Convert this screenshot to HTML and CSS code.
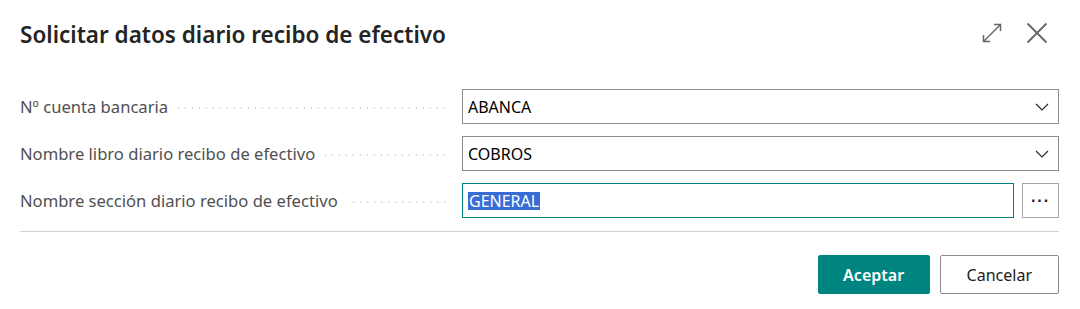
FILE: index.html
```html
<!DOCTYPE html>
<html lang="es">
<head>
<meta charset="UTF-8" />
<meta name="viewport" content="width=device-width, initial-scale=1.0"/>
<title>Solicitar datos diario recibo de efectivo</title>
<link rel="stylesheet" href="styles.css">
</head>
<body>

<div class="dialog">
  <div class="dialog-head">
    <h1 class="dialog-title">Solicitar datos diario recibo de efectivo</h1>
    <div class="head-actions">
      <button class="icon-btn" title="Expandir">
        <svg width="20" height="20" viewBox="0 0 20 20" fill="none" stroke="#666" stroke-width="1.5">
          <path d="M1.5 18.5 L18.5 1.5" />
          <path d="M12 1.5 H18.5 V8" />
          <path d="M1.5 12 V18.5 H8" />
        </svg>
      </button>
      <button class="icon-btn" title="Cerrar">
        <svg width="22" height="22" viewBox="0 0 22 22" fill="none" stroke="#666" stroke-width="1.8">
          <path d="M1.5 1.5 L20.5 20.5 M20.5 1.5 L1.5 20.5" />
        </svg>
      </button>
    </div>
  </div>

  <div class="fields">
    <div class="field">
      <label class="field-label"><span>Nº cuenta bancaria</span><span class="leader"></span></label>
      <div class="field-box">
        <span class="field-value">ABANCA</span>
        <svg class="chevron" width="14" height="8" viewBox="0 0 14 8" fill="none" stroke="#222" stroke-width="1.1">
          <path d="M1 1 L7 7 L13 1" />
        </svg>
      </div>
    </div>
    <div class="field">
      <label class="field-label"><span>Nombre libro diario recibo de efectivo</span><span class="leader"></span></label>
      <div class="field-box">
        <span class="field-value">COBROS</span>
        <svg class="chevron" width="14" height="8" viewBox="0 0 14 8" fill="none" stroke="#222" stroke-width="1.1">
          <path d="M1 1 L7 7 L13 1" />
        </svg>
      </div>
    </div>
    <div class="field">
      <label class="field-label"><span>Nombre sección diario recibo de efectivo</span><span class="leader"></span></label>
      <div class="field-row">
        <div class="field-box focused">
          <span class="field-value selected">GENERAL</span>
        </div>
        <button class="lookup-btn">&middot;&middot;&middot;</button>
      </div>
    </div>
  </div>

  <div class="divider"></div>

  <div class="dialog-foot">
    <button class="btn primary">Aceptar</button>
    <button class="btn">Cancelar</button>
  </div>
</div>

</body>
</html>
```

FILE: styles.css
```css
body {
  margin: 0;
  background-color: #fff;
  font-family: "Noto Sans", "Open Sans", sans-serif;
  color: #212121;
}
.dialog {
  padding: 0 21px 0 20px;
}
.dialog-head {
  display: flex;
  align-items: center;
  justify-content: space-between;
  height: 70px;
}
.dialog-title {
  margin: 0;
  margin-top: -2px;
  font-size: 22.5px;
  font-weight: 600;
  color: #242424;
}
.head-actions {
  display: flex;
  align-items: center;
  gap: 24px;
  margin-right: 11px;
  margin-top: -4px;
}
.icon-btn {
  background: none;
  border: none;
  padding: 0;
  display: flex;
  cursor: pointer;
}
.fields {
  display: flex;
  flex-direction: column;
  gap: 12px;
  margin-top: 19px;
}
.field {
  display: grid;
  grid-template-columns: 442px 1fr;
  align-items: center;
}
.field-label {
  display: flex;
  align-items: center;
  font-size: 16.6px;
  color: #505050;
}
.leader {
  flex: 1;
  height: 2px;
  margin: 3px 14px 0 10px;
  background-image: radial-gradient(circle, #cfcfcf 0.9px, transparent 1.1px);
  background-size: 7px 2px;
  background-position: right center;
}
.field-box {
  display: flex;
  align-items: center;
  justify-content: space-between;
  height: 35px;
  box-sizing: border-box;
  border: 1px solid #8a8d92;
  padding: 0 9px 0 5px;
  font-size: 16px;
  color: #000;
}
.field-box.focused {
  flex: 1;
  border-color: #008080;
}
.field-value.selected {
  background-color: #3a6cd6;
  color: #fff;
  padding: 0 1px;
  line-height: 18px;
}
.field-row {
  display: flex;
  gap: 8px;
}
.lookup-btn {
  width: 37px;
  height: 35px;
  border: 1px solid #a6a6a6;
  background: #fff;
  color: #212121;
  font-size: 16px;
  font-weight: 700;
  letter-spacing: 1px;
  padding: 0;
}
.divider {
  height: 1px;
  background-color: #d2d2d2;
  margin-top: 13px;
}
.dialog-foot {
  display: flex;
  justify-content: flex-end;
  gap: 10px;
  margin-top: 23px;
}
.btn {
  height: 39px;
  min-width: 112px;
  padding: 0 26px;
  box-sizing: border-box;
  border: 1px solid #8a8a8a;
  border-radius: 2px;
  background: #fff;
  font-family: inherit;
  font-size: 16px;
  color: #212121;
}
.btn.primary {
  padding: 0 20px;
  background-color: #00847f;
  border-color: #00847f;
  color: #fff;
  font-weight: 600;
}
```
